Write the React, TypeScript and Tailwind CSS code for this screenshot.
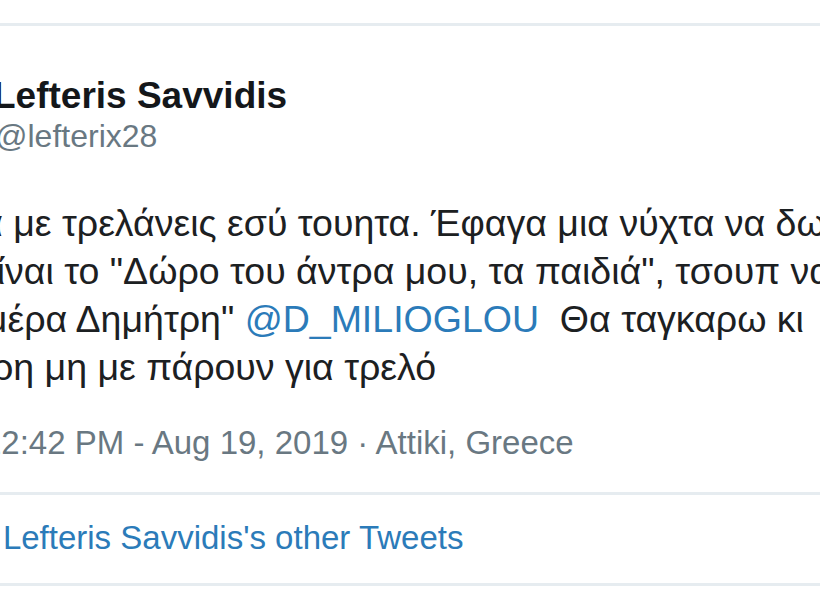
export default function App() {
  return (
    <div className="w-[820px] h-[592px] overflow-hidden bg-white font-['Liberation_Sans',Arial,sans-serif] text-[#1c2022]">
      <div className="pt-[23px]">
        <div className="h-[3px] bg-[#e6ecf0]" />
      </div>

      {/* header */}
      <div className="mt-[50px] whitespace-nowrap">
        <div className="ml-[-7px] h-[40px] text-[37px] leading-[40px] font-bold text-[#14171a]">
          Lefteris Savvidis
        </div>
        <div className="ml-[-5px] h-[40px] text-[32px] leading-[40px] text-[#697882]">
          @lefterix28
        </div>
      </div>

      {/* tweet text */}
      <div className="mt-[43px] text-[37.5px] leading-[48px] whitespace-nowrap">
        <div className="ml-[-48px]">Θα με τρελάνεις εσύ τουητα. Έφαγα μια νύχτα να δω τι</div>
        <div className="ml-[-20px]">είναι το "Δώρο του άντρα μου, τα παιδιά", τσουπ να σου</div>
        <div className="ml-[-100px]">
          Καλημέρα Δημήτρη" <span className="text-[#2b7bb9]">@D_MILIOGLOU</span>
          {'\u00a0 '}Θα ταγκαρω κι
        </div>
        <div className="ml-[-61px]">Μαρη μη με πάρουν για τρελό</div>
      </div>

      {/* timestamp */}
      <div className="mt-[28px] ml-[-17px] text-[33px] leading-[48px] whitespace-nowrap text-[#697882]">
        12:42 PM - Aug 19, 2019 · Attiki, Greece
      </div>

      <div className="mt-[25px] h-[3px] bg-[#e6ecf0]" />

      {/* footer */}
      <div className="mt-[19px] ml-[-65px] text-[33px] leading-[48px] whitespace-nowrap text-[#2b7bb9]">
        See Lefteris Savvidis's other Tweets
      </div>

      <div className="mt-[21px] h-[3px] bg-[#e6ecf0]" />
    </div>
  );
}
